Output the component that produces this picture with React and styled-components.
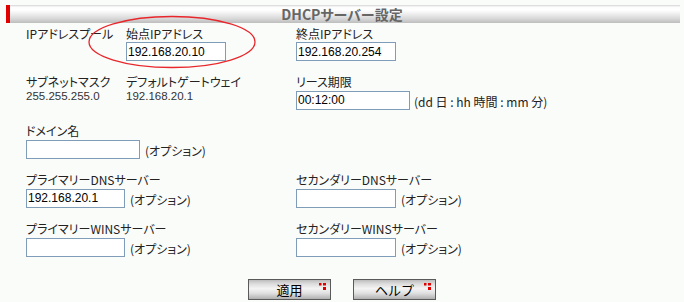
import React from "react";
import styled, { createGlobalStyle } from "styled-components";

const Global = createGlobalStyle`
  html, body { margin: 0; padding: 0; background: #fafcfa; }
  body {
    font-family: "Noto Sans CJK JP", "Liberation Sans", sans-serif;
    font-size: 12px;
    color: #222;
    font-feature-settings: "palt";
  }
`;

const Page = styled.div`
  position: relative;
  width: 684px;
  height: 302px;
  padding: 5px 4px 0 6px;
  box-sizing: border-box;
`;

const Header = styled.div`
  height: 18px;
  box-sizing: border-box;
  border-left: 4px solid #e00000;
  background: linear-gradient(
    to bottom,
    #d4d4d4 0px,
    #fdfdfd 2px,
    #ffffff 5px,
    #eeeeee 9px,
    #d6d6d6 14px,
    #bdbdbd 18px
  );
  display: flex;
  align-items: center;
  justify-content: center;
  padding-right: 6px;
  font-weight: bold;
  font-size: 14px;
  color: #666666;
  line-height: 18px;
`;

const Form = styled.div`
  display: grid;
  grid-template-columns: 100px 170px 1fr;
  row-gap: 13px;
  padding: 3px 0 0 20px;
`;

const Field = styled.div`
  display: flex;
  flex-direction: column;
  align-items: flex-start;
  grid-column: ${(p) => p.$span || "auto"};
`;

const Label = styled.div`
  line-height: 15px;
  height: 15px;
  white-space: nowrap;
`;

const Value = styled.div`
  font-family: "Liberation Sans", Arial, sans-serif;
  font-size: 11.5px;
  line-height: 15px;
  white-space: nowrap;
  color: #333;
`;

const Line = styled.div`
  display: flex;
  align-items: center;
  margin-top: 1px;
`;

const Input = styled.input`
  box-sizing: border-box;
  width: ${(p) => p.$w || 100}px;
  height: 19px;
  margin: 0;
  border: 1px solid #7f9db9;
  background: #ffffff;
  padding: 0 1px;
  font-family: "Liberation Sans", Arial, sans-serif;
  font-size: 12px;
  color: #000;
  outline: none;
`;

const Hint = styled.span`
  margin-left: ${(p) => p.$gap || 5}px;
  padding-top: 3px;
  white-space: nowrap;
  color: #222;
`;

const Buttons = styled.div`
  display: flex;
  justify-content: center;
  gap: 22px;
  margin-top: 22px;
  padding-right: 2px;
`;

const Button = styled.button`
  position: relative;
  box-sizing: border-box;
  width: 83px;
  height: 21px;
  border: 1px solid #5a5a5a;
  margin: 0;
  padding: 0;
  background: linear-gradient(
    to bottom,
    #bcbcbc 0%,
    #dcdcdc 20%,
    #f4f4f4 45%,
    #e0e0e0 70%,
    #b0b0b0 100%
  );
  font-family: "Noto Sans CJK JP", sans-serif;
  font-size: 13px;
  line-height: 19px;
  color: #000;
  cursor: pointer;
`;

const Dots = styled.svg`
  position: absolute;
  top: 3px;
  right: 4px;
`;

const Ellipse = styled.svg`
  position: absolute;
  left: 87px;
  top: 15px;
  overflow: visible;
  pointer-events: none;
`;

function Mark() {
  return (
    <Dots width="7" height="7" viewBox="0 0 7 7">
      <rect x="0" y="0" width="2.5" height="2.5" fill="#e00000" />
      <rect x="4" y="0" width="3" height="2.5" fill="#e00000" />
      <rect x="4" y="4" width="3" height="3" fill="#e00000" />
    </Dots>
  );
}

export default function App() {
  return (
    <>
      <Global />
      <Page>
        <Header>DHCPサーバー設定</Header>
        <Form>
          <Field>
            <Label>IPアドレスプール</Label>
          </Field>
          <Field>
            <Label>始点IPアドレス</Label>
            <Line>
              <Input $w={100} defaultValue="192.168.20.10" />
            </Line>
          </Field>
          <Field>
            <Label>終点IPアドレス</Label>
            <Line>
              <Input $w={100} defaultValue="192.168.20.254" />
            </Line>
          </Field>

          <Field>
            <Label>サブネットマスク</Label>
            <Value>255.255.255.0</Value>
          </Field>
          <Field>
            <Label>デフォルトゲートウェイ</Label>
            <Value>192.168.20.1</Value>
          </Field>
          <Field>
            <Label>リース期限</Label>
            <Line>
              <Input $w={114} defaultValue="00:12:00" />
              <Hint $gap={4}>(dd 日 : hh 時間 : mm 分)</Hint>
            </Line>
          </Field>

          <Field $span="1 / -1">
            <Label>ドメイン名</Label>
            <Line>
              <Input $w={114} defaultValue="" />
              <Hint>(オプション)</Hint>
            </Line>
          </Field>

          <Field $span="1 / 3">
            <Label>プライマリーDNSサーバー</Label>
            <Line>
              <Input $w={99} defaultValue="192.168.20.1" />
              <Hint>(オプション)</Hint>
            </Line>
          </Field>
          <Field>
            <Label>セカンダリーDNSサーバー</Label>
            <Line>
              <Input $w={100} defaultValue="" />
              <Hint>(オプション)</Hint>
            </Line>
          </Field>

          <Field $span="1 / 3">
            <Label>プライマリーWINSサーバー</Label>
            <Line>
              <Input $w={99} defaultValue="" />
              <Hint>(オプション)</Hint>
            </Line>
          </Field>
          <Field>
            <Label>セカンダリーWINSサーバー</Label>
            <Line>
              <Input $w={100} defaultValue="" />
              <Hint>(オプション)</Hint>
            </Line>
          </Field>
        </Form>
        <Buttons>
          <Button>
            適用
            <Mark />
          </Button>
          <Button>
            ヘルプ
            <Mark />
          </Button>
        </Buttons>
        <Ellipse width="170" height="54" viewBox="0 0 170 54">
          <ellipse cx="85" cy="27" rx="83" ry="25.5" fill="none" stroke="#e8262b" strokeWidth="1.3" />
        </Ellipse>
      </Page>
    </>
  );
}
